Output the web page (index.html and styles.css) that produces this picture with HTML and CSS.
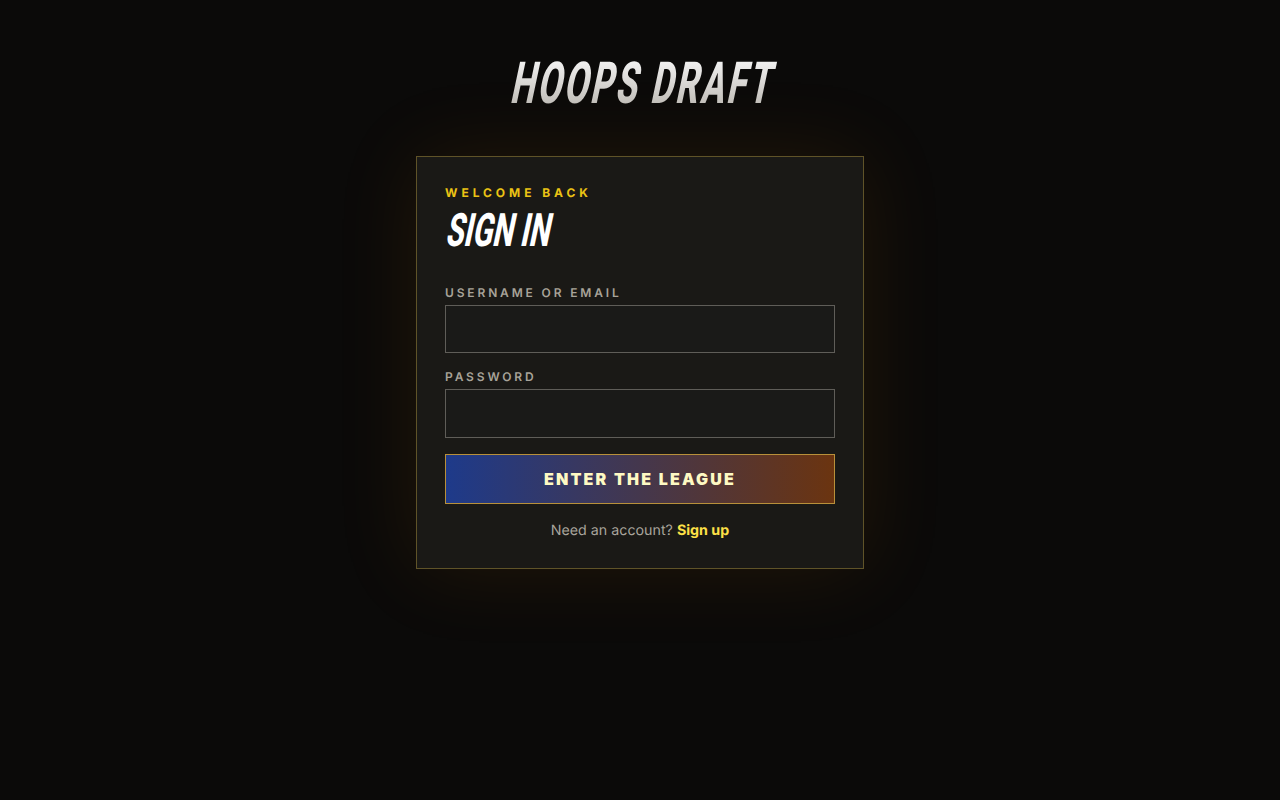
FILE: index.html
```html
<!DOCTYPE html>
<html lang="en">
<head>
<meta charset="utf-8">
<title>Hoops Draft</title>
<link rel="stylesheet" href="styles.css">
</head>
<body>
<main class="page">
  <h1 class="logo">HOOPS DRAFT</h1>
  <section class="card">
    <p class="eyebrow">WELCOME BACK</p>
    <h2 class="title">SIGN IN</h2>
    <form class="form">
      <div class="field">
        <label class="label" for="user">USERNAME OR EMAIL</label>
        <input class="input" id="user" type="text">
      </div>
      <div class="field">
        <label class="label" for="pass">PASSWORD</label>
        <input class="input" id="pass" type="password">
      </div>
      <button class="submit" type="button">ENTER THE LEAGUE</button>
    </form>
    <p class="foot">Need an account? <a class="link" href="#">Sign up</a></p>
  </section>
</main>
</body>
</html>
```
FILE: styles.css
```css
* { box-sizing: border-box; }
html, body { margin: 0; height: 100%; }
body {
  background: #0b0a09;
  font-family: "Inter", "Liberation Sans", sans-serif;
  text-rendering: geometricPrecision;
  color: #fff;
}
.page {
  display: flex;
  flex-direction: column;
  align-items: center;
  padding-top: 56px;
}
.logo {
  margin: 0 0 44px;
  height: 56px;
  font-family: "Roboto", "Liberation Sans", sans-serif;
  font-weight: 800;
  font-size: 58px;
  line-height: 56px;
  letter-spacing: 4.1px;
  white-space: nowrap;
  background: linear-gradient(180deg, #f7f7f7, #b8b4ae);
  -webkit-background-clip: text;
  background-clip: text;
  color: transparent;
  transform: translateX(4px) skewX(-12deg) scaleX(0.6);
}
.card {
  width: 448px;
  height: 413px;
  padding: 28px;
  background: #1a1916;
  border: 1px solid #5f5328;
  box-shadow: 0 0 80px rgba(234, 140, 8, 0.1);
}
.eyebrow {
  margin: 0 0 6px;
  height: 16px;
  font-size: 12px;
  font-weight: 700;
  line-height: 16px;
  letter-spacing: 3.95px;
  color: #ebc314;
}
.title {
  margin: 0 0 32px;
  height: 46px;
  font-family: "Roboto", "Liberation Sans", sans-serif;
  font-size: 46px;
  font-weight: 800;
  line-height: 46px;
  color: #fff;
  white-space: nowrap;
  transform: translate(-2px, 1px) skewX(-12deg) scaleX(0.635);
  transform-origin: left bottom;
}
.field { margin-bottom: 16px; }
.label {
  display: block;
  height: 16px;
  margin-bottom: 4px;
  font-size: 12px;
  font-weight: 600;
  line-height: 16px;
  letter-spacing: 2.85px;
  color: #a8a399;
}
.input {
  display: block;
  width: 100%;
  height: 48.4px;
  background: #1a1a18;
  border: 1px solid #5f5d58;
  outline: none;
}
.submit {
  display: block;
  width: 100%;
  height: 50px;
  background: linear-gradient(90deg, #1e3a8a, #6b3410);
  border: 1px solid #b8903a;
  color: #fef9c3;
  font-family: inherit;
  font-size: 16px;
  font-weight: 900;
  letter-spacing: 2.2px;
}
.foot {
  margin: 17.4px 0 0;
  font-size: 14.25px;
  line-height: 20px;
  text-align: center;
  color: #a8a49c;
}
.link {
  font-weight: 700;
  color: #fde047;
  text-decoration: none;
}
```
